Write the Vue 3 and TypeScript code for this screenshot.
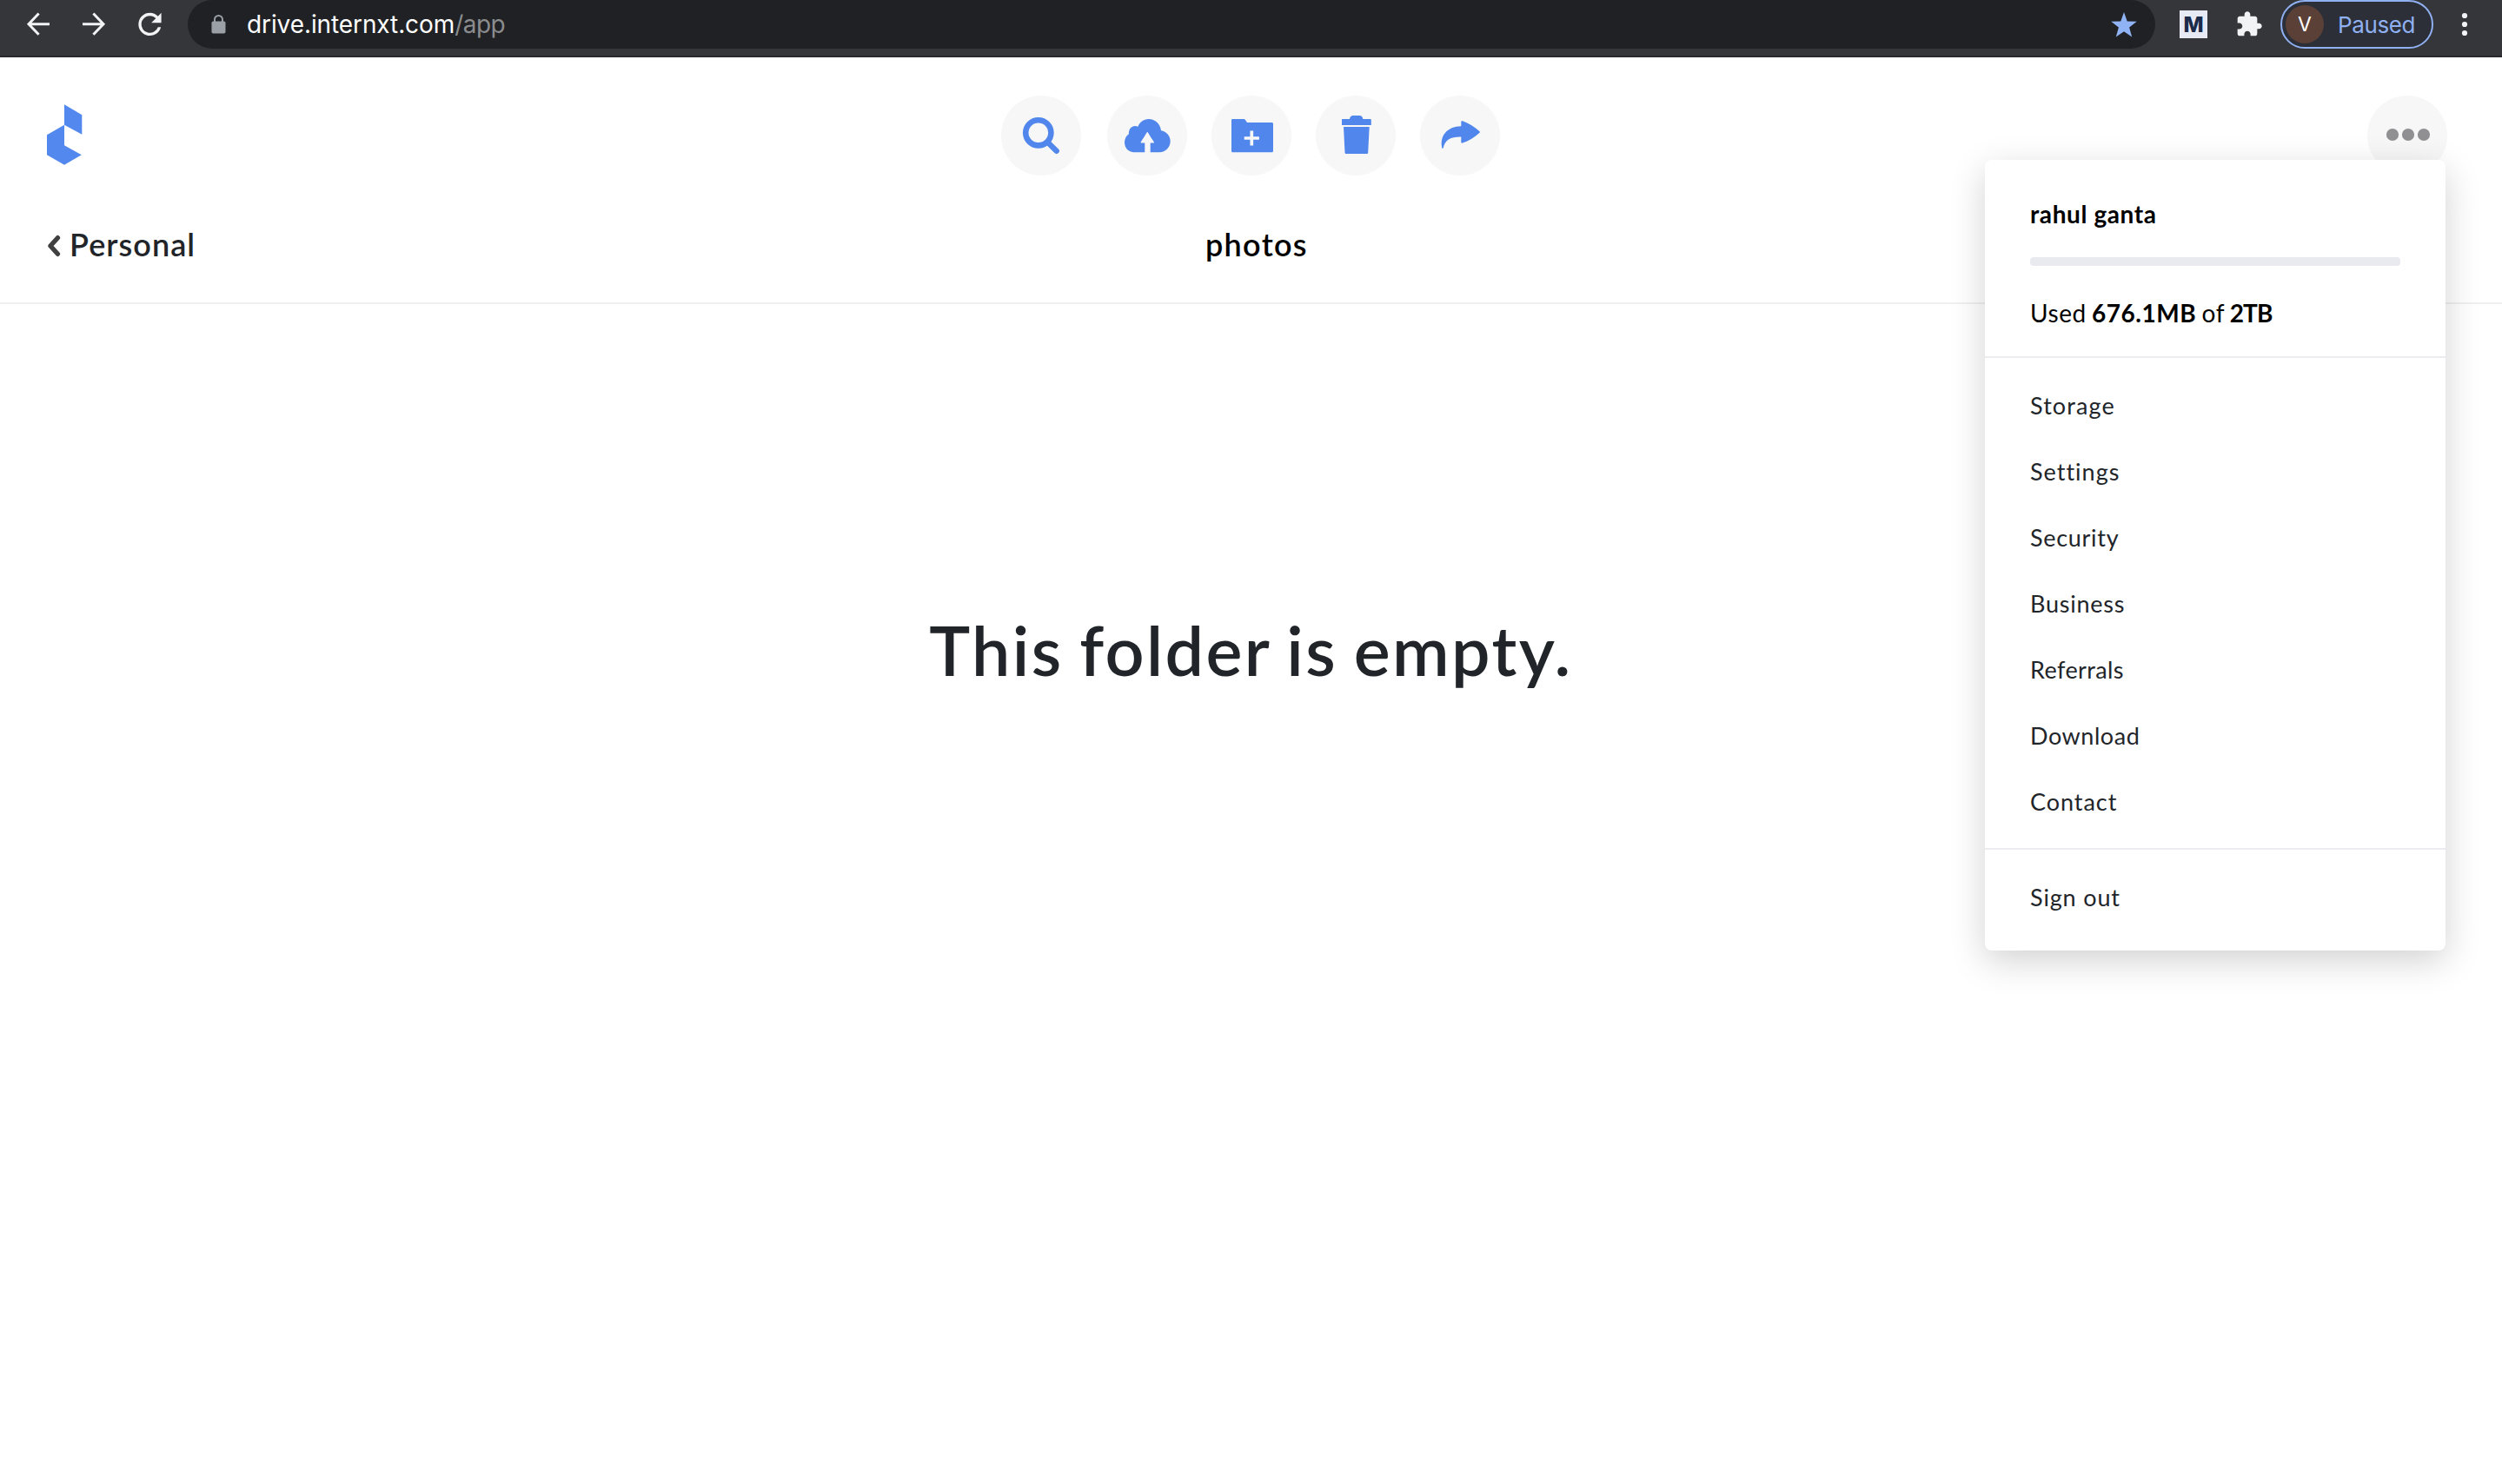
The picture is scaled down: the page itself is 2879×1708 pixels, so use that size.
<script setup lang="ts">
interface MenuItem {
  label: string
  tracking: number
}

const menuItems: MenuItem[] = [
  { label: 'Storage', tracking: 1.1 },
  { label: 'Settings', tracking: 1 },
  { label: 'Security', tracking: 0.7 },
  { label: 'Business', tracking: 0.75 },
  { label: 'Referrals', tracking: 0.4 },
  { label: 'Download', tracking: 0.55 },
  { label: 'Contact', tracking: 0.95 },
]
</script>

<template>
  <div class="window">
    <header class="browser">
      <svg class="nav" width="200" height="56" viewBox="0 0 200 56" fill="none" stroke="#f1f3f4" stroke-width="3">
        <path d="M57 27.7H33.5M44.6 15.5L33 27.7l11.6 12" />
        <path d="M95 27.7h23.5M107.4 15.5L119 27.7l-11.6 12" />
        <path
          transform="translate(152.8 8.3) scale(1.64)"
          fill="#f1f3f4"
          stroke="none"
          d="M17.65 6.35A7.96 7.96 0 0 0 12 4a8 8 0 1 0 7.73 10h-2.08A6 6 0 1 1 12 6c1.66 0 3.14.69 4.22 1.78L13 11h7V4z"
        />
      </svg>
      <div class="address">
        <svg class="lock" width="17" height="22" viewBox="0 0 17 22">
          <path d="M4 9V5.5a4.5 4.5 0 0 1 9 0V9" fill="none" stroke="#9aa0a6" stroke-width="2" />
          <rect x="0.5" y="7.5" width="16" height="14" rx="1.8" fill="#9aa0a6" />
        </svg>
        <span class="url">drive.internxt.com<span class="path">/app</span></span>
        <svg class="star" width="30" height="29" viewBox="0 0 30 29">
          <path d="M15 0l3.7 10.4 11.1.3-8.7 6.8 3.1 11L15 22.3 5.8 28.5l3.1-11L.2 10.7l11.1-.3z" fill="#8fb3f5" />
        </svg>
      </div>
      <div class="ext">M</div>
      <svg class="puzzle" width="32" height="32" viewBox="0 0 24 24" fill="#f1f3f4">
        <path d="M20.5 11H19V7c0-1.1-.9-2-2-2h-4V3.5C13 2.12 11.88 1 10.5 1S8 2.12 8 3.5V5H4c-1.1 0-1.99.9-1.99 2v3.8H3.5c1.49 0 2.7 1.21 2.7 2.7s-1.21 2.7-2.7 2.7H2V20c0 1.1.9 2 2 2h3.8v-1.5c0-1.49 1.21-2.7 2.7-2.7s2.7 1.21 2.7 2.7V22H17c1.1 0 2-.9 2-2v-4h1.5c1.38 0 2.5-1.12 2.5-2.5S21.88 11 20.5 11z" />
      </svg>
      <div class="profile">
        <span class="avatar">V</span>
        <span class="state">Paused</span>
      </div>
      <svg class="kebab" width="8" height="28" viewBox="0 0 8 28" fill="#f1f3f4">
        <circle cx="4" cy="4" r="3.1" /><circle cx="4" cy="14" r="3.1" /><circle cx="4" cy="24" r="3.1" />
      </svg>
    </header>

    <section class="toolbar">
      <svg class="logo" width="42" height="72" viewBox="0 0 42 72" fill="#5388ee">
        <path d="M20 1.3l20.3 12v22.4L20 24.7z" />
        <path d="M20 24.7v23.6l19.8 11L20 70.7 0 59.3v-23z" />
      </svg>
      <div class="actions">
        <button class="round first" aria-label="Search">
          <svg viewBox="0 0 92 92" fill="none" stroke="#5187ec">
            <circle cx="42.8" cy="42.8" r="14.6" stroke-width="6.6" />
            <path d="M54 54.3l9.7 9.5" stroke-width="6.4" stroke-linecap="round" />
          </svg>
        </button>
        <button class="round" aria-label="Upload">
          <svg viewBox="0 0 92 92" fill="#5187ec">
            <path d="M31 65.3C24.5 65.3 20 60.2 20 53.8c0-3.9 1.900-7.300 4.900-9.500C24.600 38.500 28 35 32 35c1.300 0 2.400.2 3.500.7C37.300 30.500 42 27 47.700 27c7.500 0 13.500 5.500 14.300 13.200 6.200.9 10.700 6.200 10.700 12.400 0 7-5.600 12.700-12.500 12.700H49.700V54.600h3.400c.8 0 1.100-.6.600-1.300-2.200-3.300-4-6-7-11-.3-.5-.6-.5-.9 0-3 5-4.800 7.700-6.900 11-.5.7-.2 1.300.6 1.300h3.800v10.700z" />
          </svg>
        </button>
        <button class="round" aria-label="New folder">
          <svg viewBox="0 0 92 92">
            <path d="M24.500 27h12.700c.8 0 1.300.3 1.700.9L41 31h28.500c.9 0 1.500.6 1.500 1.500v31.300c0 .9-.6 1.500-1.500 1.500h-45c-.9 0-1.500-.6-1.500-1.500V28.500c0-.9.6-1.500 1.500-1.500z" fill="#5187ec" />
            <path d="M46.300 40.400v17.200M37.700 49h17.200" stroke="#f7f7f7" stroke-width="3.700" />
          </svg>
        </button>
        <button class="round" aria-label="Delete">
          <svg viewBox="0 0 92 92" fill="#5187ec">
            <path d="M30.500 27H39c.3-2.500 1.800-4 4-4h7.300c2.200 0 3.700 1.500 4 4H63c.5 0 .8.300.8.800V34H30v-6.200c0-.5.200-.8.500-.8z" />
            <path d="M32 36h29.700l-1.500 29.500c-.1 1-.6 1.500-1.500 1.500H35c-.9 0-1.400-.5-1.500-1.500z" />
          </svg>
        </button>
        <button class="round" aria-label="Share">
          <svg viewBox="0 0 92 92" fill="#5187ec">
            <path d="M47.300 30.300c0-1 .8-1.400 1.700-1 7 2.700 14 6.700 19.300 11.700.8.700.8 1.300 0 2C63 48 56 52 49 54.600c-.9.4-1.700 0-1.700-1v-6C36 47.300 29 50.500 26.700 60.200c-.2 1-1.200 1-1.400 0C22.500 46.500 31 35.600 47.300 35.300z" />
          </svg>
        </button>
      </div>
      <button class="round more" aria-label="More">
        <svg viewBox="0 0 92 92" fill="#909093">
          <circle cx="29" cy="45" r="7.1" /><circle cx="47" cy="45" r="7.1" /><circle cx="65" cy="45" r="7.1" />
        </svg>
      </button>
    </section>

    <nav class="crumbs">
      <a class="back">
        <svg width="16" height="26" viewBox="0 0 16 26" fill="none" stroke="#404040" stroke-width="5.4" stroke-linecap="round" stroke-linejoin="round">
          <path d="M12.4 3.7L4 13l8.4 9.3" />
        </svg>
        <span>Personal</span>
      </a>
      <span class="folder">photos</span>
    </nav>

    <main class="empty">
      <h1>This folder is empty.</h1>
    </main>

    <aside class="menu">
      <div class="account">
        <div class="name">rahul ganta</div>
        <div class="bar"></div>
        <div class="usage">Used <b>676.1MB</b> of <b class="total">2TB</b></div>
      </div>
      <ul class="links">
        <li v-for="item in menuItems" :key="item.label" :style="{ letterSpacing: item.tracking + 'px' }">{{ item.label }}</li>
      </ul>
      <ul class="links last">
        <li class="signout">Sign out</li>
      </ul>
    </aside>
  </div>
</template>

<style>
body {
  background: #fff;
}
</style>

<style scoped>
.window {
  position: relative;
  height: 1708px;
  overflow: hidden;
  background: #fff;
  font-family: Lato, "Liberation Sans", sans-serif;
  color: #212529;
}
svg {
  display: block;
  flex: none;
}
.browser {
  box-sizing: border-box;
  height: 66px;
  display: flex;
  align-items: flex-start;
  background: #35363a;
  border-bottom: 2px solid #28292c;
  font-family: Inter, "Liberation Sans", sans-serif;
}
.address {
  margin-left: 16px;
  width: 2264px;
  height: 56px;
  box-sizing: border-box;
  padding: 0 21px 0 27px;
  border-radius: 28px;
  background: #202124;
  display: flex;
  align-items: center;
  flex: none;
}
.url {
  margin-left: 24px;
  font-size: 28px;
  line-height: 56px;
  letter-spacing: -0.1px;
  color: #fff;
}
.path {
  color: #8b8c8e;
  letter-spacing: -0.5px;
}
.star {
  margin-left: auto;
}
.ext {
  margin: 12px 0 0 28px;
  width: 32px;
  height: 32px;
  background: #e7e9f4;
  color: #1b2a49;
  font-size: 24.5px;
  font-weight: 800;
  line-height: 32px;
  text-align: center;
}
.puzzle {
  margin: 12px 0 0 32px;
}
.profile {
  box-sizing: border-box;
  margin-left: 20px;
  width: 176px;
  height: 56px;
  border: 2px solid #8fb0f1;
  border-radius: 28px;
  padding-left: 4px;
  background: #2c2f38;
  display: flex;
  align-items: center;
}
.avatar {
  width: 44px;
  height: 44px;
  border-radius: 50%;
  background: #5a4037;
  color: #fff;
  font-size: 23px;
  line-height: 44px;
  text-align: center;
}
.state {
  margin-left: 16px;
  font-size: 26px;
  letter-spacing: -0.4px;
  color: #8fb0f1;
}
.kebab {
  margin: 14px 0 0 32px;
}
.toolbar {
  display: grid;
  grid-template-columns: 1fr auto 1fr;
  align-items: start;
  padding: 44px 55px 0 54px;
}
.logo {
  margin-top: 9px;
}
.actions {
  display: flex;
  gap: 28px;
}
.round {
  width: 92px;
  height: 92px;
  padding: 0;
  border: 0;
  border-radius: 50%;
  background: #f7f7f7;
}
.round.first {
  margin-right: 2px;
}
.round svg {
  width: 92px;
  height: 92px;
}
.more {
  justify-self: end;
  margin-right: 8px;
}
.crumbs {
  display: grid;
  grid-template-columns: 1333px auto;
  padding: 55px 54px 43px;
  border-bottom: 2px solid #f0f0f1;
  font-size: 36px;
  font-weight: 600;
  line-height: 48px;
}
.back {
  display: flex;
  align-items: center;
  gap: 10px;
  letter-spacing: 1.05px;
}
.back svg {
  margin-top: 4px;
}
.folder {
  color: #000;
  letter-spacing: 1.3px;
}
.empty {
  padding-top: 350px;
  text-align: center;
}
h1 {
  margin: 0;
  font-size: 79px;
  font-weight: 600;
  line-height: 96px;
  letter-spacing: 2.4px;
  word-spacing: -3.5px;
}
.menu {
  position: absolute;
  left: 2284px;
  top: 184px;
  width: 530px;
  height: 910px;
  border-radius: 8px;
  background: #fff;
  box-shadow: 0 12px 40px rgba(0, 0, 0, 0.18);
}
.account {
  padding: 42px 52px 30px;
  color: #000;
  font-size: 28px;
  line-height: 40px;
}
.name {
  font-weight: 700;
  letter-spacing: 0.6px;
}
.bar {
  height: 10px;
  margin: 30px 0 34px;
  border-radius: 4px;
  background: #e9eaef;
}
.usage {
  letter-spacing: 0.55px;
  word-spacing: -1.5px;
}
.total {
  letter-spacing: -0.9px;
}
.links {
  margin: 0;
  padding: 17px 52px 15px;
  border-top: 2px solid #ebebf0;
  list-style: none;
  font-size: 27px;
  line-height: 76px;
}
.signout {
  letter-spacing: 0.85px;
}
</style>
